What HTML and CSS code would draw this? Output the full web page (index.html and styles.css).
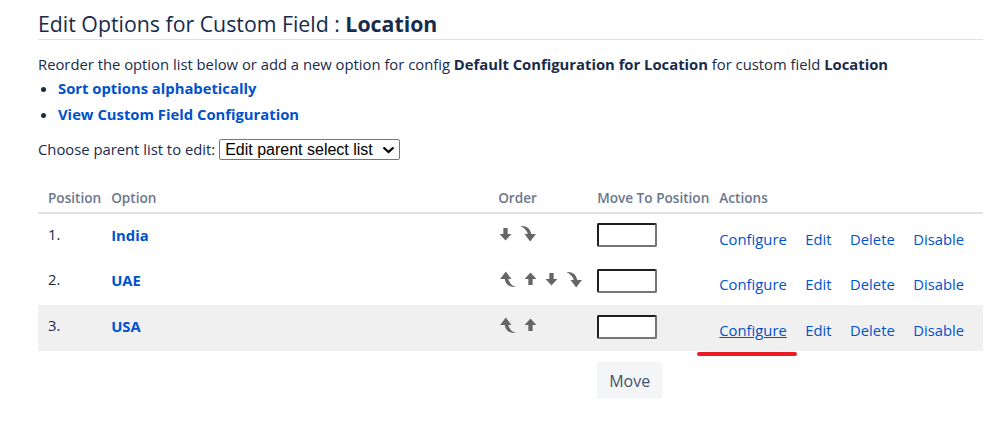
FILE: index.html
```html
<!DOCTYPE html>
<html>
<head>
<meta charset="utf-8">
<link rel="stylesheet" href="styles.css">
</head>
<body>
<div class="page">
  <h1 class="title">Edit Options for Custom Field : <b>Location</b></h1>
  <p class="intro">Reorder the option list below or add a new option for config <b>Default Configuration for Location</b> for custom field <b>Location</b></p>
  <ul class="links">
    <li><a href="#">Sort options alphabetically</a></li>
    <li><a href="#">View Custom Field Configuration</a></li>
  </ul>
  <div class="parent">
    <span>Choose parent list to edit:</span>
    <span class="select-wrap">
      <select class="select"><option>Edit parent select list</option></select>
      <svg class="chev" width="13" height="8" viewBox="0 0 13 8"><path d="M1.5 1.5 L6.5 6 L11.5 1.5" fill="none" stroke="#000" stroke-width="2.2"/></svg>
    </span>
  </div>
  <div class="table-wrap">
  <table class="options">
    <colgroup>
      <col class="c-pos"><col class="c-opt"><col class="c-ord"><col class="c-move"><col class="c-act">
    </colgroup>
    <thead>
      <tr><th>Position</th><th>Option</th><th>Order</th><th>Move To Position</th><th>Actions</th></tr>
    </thead>
    <tbody>
      <tr>
        <td class="num">1.</td>
        <td><a class="opt" href="#">India</a></td>
        <td class="order">
          <span class="icons">
            <svg class="ic" width="13" height="14" viewBox="0 0 12 13"><path d="M4 1 H8 V6.5 H11.5 L6 12.5 L0.5 6.5 H4 Z" fill="#666"/></svg>
            <svg class="ic" width="17" height="17" viewBox="0 0 15 15"><path d="M0.5 1 Q8.5 0.5 10 8 H14 L9 14.5 L4 8 H6.8 Q6 3.5 0.5 1 Z" fill="#666"/></svg>
          </span>
        </td>
        <td><input class="pos-input" type="text"></td>
        <td class="actions"><a href="#">Configure</a><a href="#">Edit</a><a href="#">Delete</a><a href="#">Disable</a></td>
      </tr>
      <tr>
        <td class="num">2.</td>
        <td><a class="opt" href="#">UAE</a></td>
        <td class="order">
          <span class="icons">
            <svg class="ic" width="17" height="17" viewBox="0 0 15 15"><path d="M14.5 14 Q6.5 14.5 5 7 H1 L6 0.5 L11 7 H8.2 Q9 11.5 14.5 14 Z" fill="#666"/></svg>
            <svg class="ic" width="13" height="14" viewBox="0 0 12 13"><path d="M4 12 H8 V6.5 H11.5 L6 0.5 L0.5 6.5 H4 Z" fill="#666"/></svg>
            <svg class="ic" width="13" height="14" viewBox="0 0 12 13"><path d="M4 1 H8 V6.5 H11.5 L6 12.5 L0.5 6.5 H4 Z" fill="#666"/></svg>
            <svg class="ic" width="17" height="17" viewBox="0 0 15 15"><path d="M0.5 1 Q8.5 0.5 10 8 H14 L9 14.5 L4 8 H6.8 Q6 3.5 0.5 1 Z" fill="#666"/></svg>
          </span>
        </td>
        <td><input class="pos-input" type="text"></td>
        <td class="actions"><a href="#">Configure</a><a href="#">Edit</a><a href="#">Delete</a><a href="#">Disable</a></td>
      </tr>
      <tr class="hl">
        <td class="num">3.</td>
        <td><a class="opt" href="#">USA</a></td>
        <td class="order">
          <span class="icons">
            <svg class="ic" width="17" height="17" viewBox="0 0 15 15"><path d="M14.5 14 Q6.5 14.5 5 7 H1 L6 0.5 L11 7 H8.2 Q9 11.5 14.5 14 Z" fill="#666"/></svg>
            <svg class="ic" width="13" height="14" viewBox="0 0 12 13"><path d="M4 12 H8 V6.5 H11.5 L6 0.5 L0.5 6.5 H4 Z" fill="#666"/></svg>
          </span>
        </td>
        <td><input class="pos-input" type="text"></td>
        <td class="actions"><a class="hover" href="#">Configure</a><a href="#">Edit</a><a href="#">Delete</a><a href="#">Disable</a><span class="mark"></span></td>
      </tr>
    </tbody>
    <tfoot>
      <tr><td></td><td></td><td></td><td><button class="move-btn" type="button">Move</button></td><td></td></tr>
    </tfoot>
  </table>
  </div>
</div>
</body>
</html>
```
FILE: styles.css
```css
html, body {
  margin: 0;
  padding: 0;
  background: #fff;
}
body {
  font-family: "Open Sans", "Noto Sans", sans-serif;
  font-size: 14.8px;
  color: #172b4d;
}
.page {
  padding: 10px 11px 0 38px;
}
.title {
  margin: 0;
  font-size: 21.3px;
  font-weight: 400;
  line-height: 28px;
  padding-bottom: 1px;
  border-bottom: 1px solid #dfe1e6;
}
.title b {
  font-weight: 700;
}
.intro {
  margin: 12px 0 0;
  line-height: 24px;
}
.intro b { font-weight: 700; }
.links {
  margin: 0;
  padding: 0 0 0 20px;
}
.links li {
  line-height: 24px;
  margin-bottom: 2px;
}
.links a {
  color: #0052cc;
  font-weight: 700;
  text-decoration: none;
}
.parent {
  margin-top: 11px;
  display: flex;
  align-items: center;
  gap: 4px;
  height: 24px;
}
.select-wrap {
  position: relative;
  display: inline-block;
}
.select {
  appearance: none;
  -webkit-appearance: none;
  font-family: "Liberation Sans", Arial, sans-serif;
  font-size: 16px;
  color: #000;
  background: #fff;
  border: 1px solid #767676;
  border-radius: 2px;
  height: 21px;
  padding: 0 26px 0 5px;
  margin: 0;
  display: block;
}
.chev {
  position: absolute;
  right: 5px;
  top: 7px;
}
.table-wrap {
  position: relative;
  margin-top: 24px;
}
.options {
  width: 100%;
  border-collapse: collapse;
}
.c-pos { width: 63px; }
.c-opt { width: 387px; }
.c-ord { width: 99px; }
.c-move { width: 122px; }
.options th {
  text-align: left;
  font-size: 13.6px;
  font-weight: 600;
  color: #6b778c;
  padding: 4px 0 5px 10px;
  border-bottom: 2px solid #dfe1e6;
  white-space: nowrap;
  line-height: 18px;
}
.options td {
  height: 46px;
  padding: 0 0 0 10px;
  vertical-align: middle;
  box-sizing: border-box;
}
.options tr.hl td {
  background: #f0f0f0;
}
.num {
  padding-bottom: 6px !important;
}
.opt {
  color: #0052cc;
  font-weight: 700;
  text-decoration: none;
  position: relative;
  top: -2px;
}
.icons {
  display: flex;
  align-items: center;
  gap: 8px;
  position: relative;
  top: -3px;
  padding-left: 1px;
}
.ic { display: block; }
.pos-input {
  width: 60px;
  height: 24px;
  box-sizing: border-box;
  border-style: solid;
  border-width: 2px;
  border-color: #1f1f1f #767676 #767676 #1f1f1f;
  border-radius: 2px;
  padding: 0;
  margin: 0 0 3px;
  display: block;
}
.actions {
  position: relative;
  padding-top: 4px !important;
  white-space: nowrap;
}
.actions a {
  color: #0052cc;
  text-decoration: none;
  margin-right: 18.5px;
}
.actions a.hover {
  text-decoration: underline;
}
.mark {
  position: absolute;
  left: -12px;
  bottom: -5px;
  width: 100px;
  height: 4px;
  border-radius: 2px;
  background: #ec1c24;
}
.options tfoot td {
  height: 58px;
  padding-top: 11px;
  vertical-align: top;
}
.move-btn {
  font-family: "Open Sans", "Noto Sans", sans-serif;
  font-size: 16px;
  color: #42526e;
  background: #f4f5f7;
  border: none;
  border-radius: 3px;
  width: 65px;
  height: 37px;
  padding: 0;
  margin: 0;
}
```
